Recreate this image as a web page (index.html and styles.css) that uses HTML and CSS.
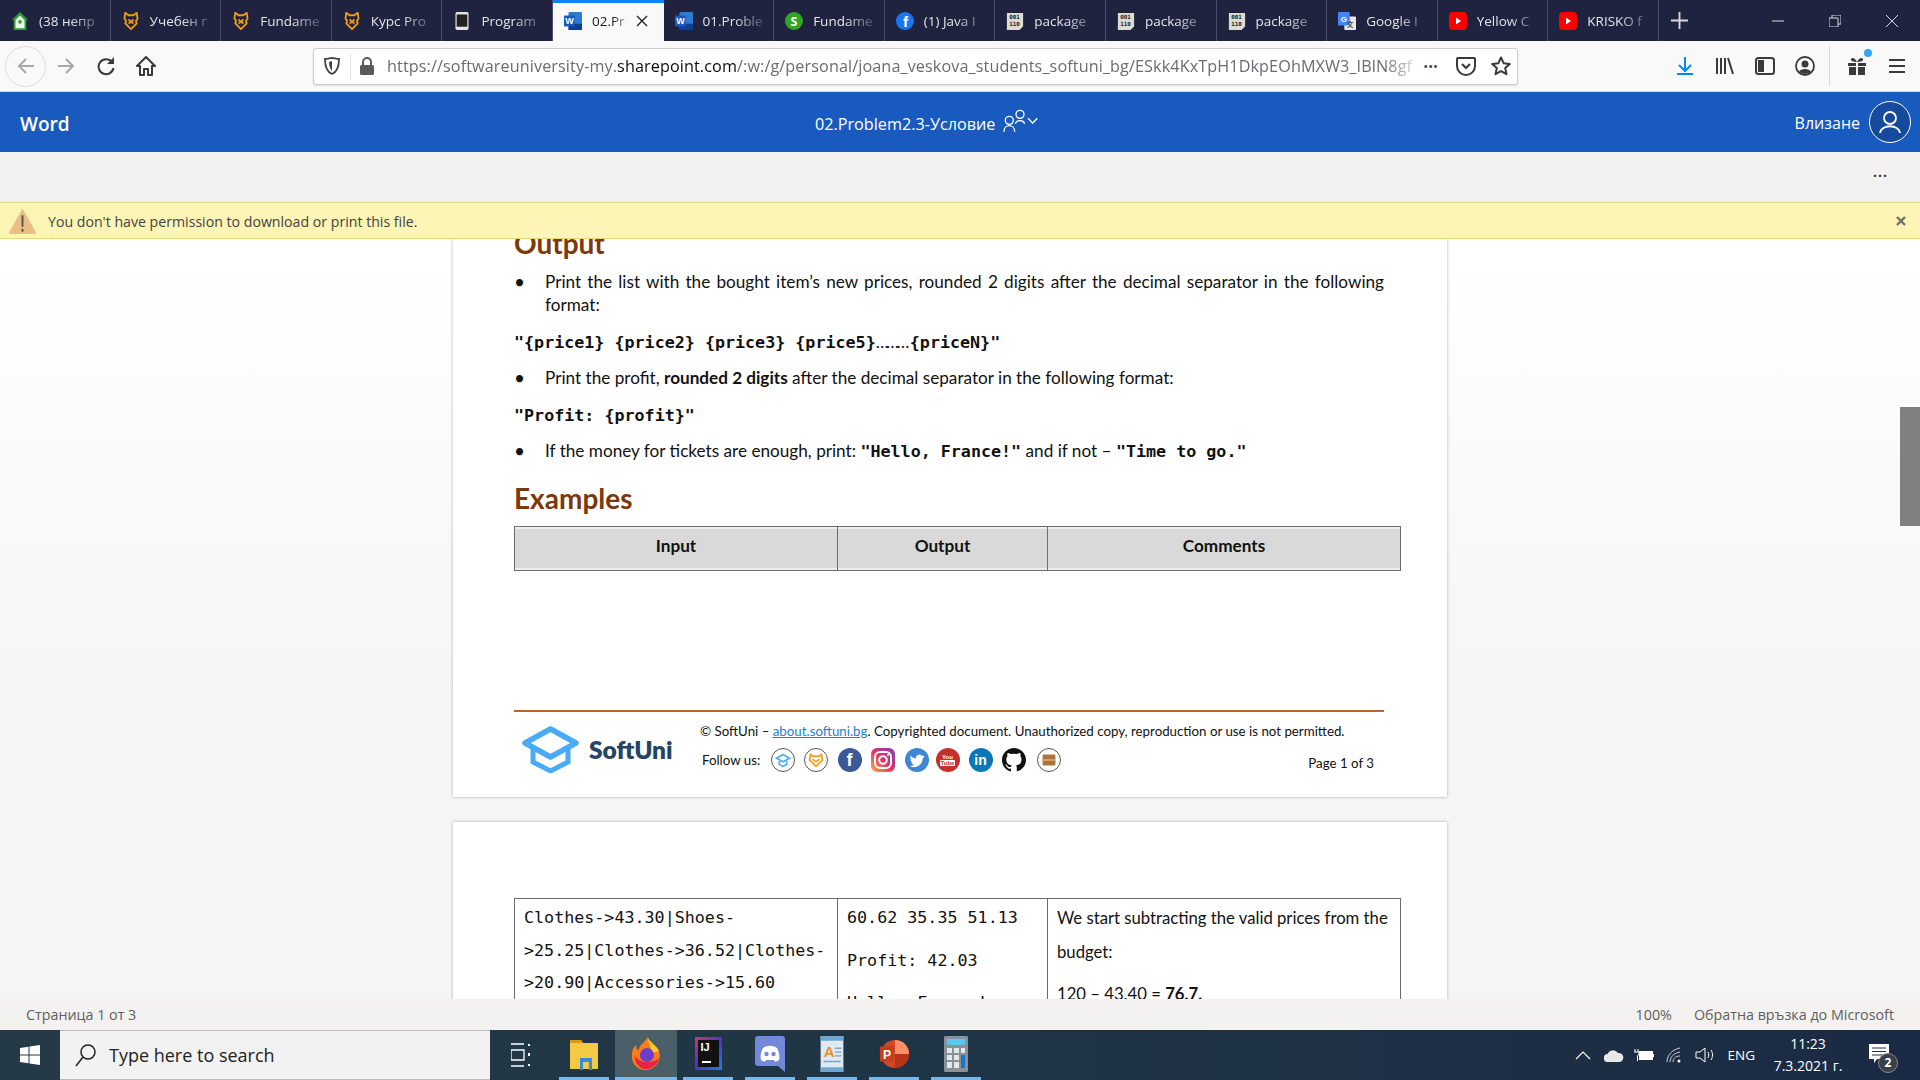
FILE: index.html
```html
<!DOCTYPE html>
<html lang="en">
  <head>
    <meta charset="UTF-8" />
    <title>02.Problem2.3-Условие</title>
    <link rel="stylesheet" href="styles.css">
  </head>

  <body>
    <svg class="defs" width="0" height="0">
      <symbol id="i-fox" viewBox="0 0 18 22">
        <path d="M2 1l4 3h6l4-3 1 7-2 3 1 3-7 7-7-7 1-3-2-3z M6 9l3 3 3-3 M6 14l3-2 3 2" fill="none" stroke="#f39c12" stroke-width="2.2" stroke-linejoin="round"/>
      </symbol>
      <symbol id="i-yt" viewBox="0 0 18 18">
        <rect width="18" height="18" y="0" rx="4" fill="#f00"/>
        <path d="M7 5.5l5 3.5-5 3.5z" fill="#fff"/>
      </symbol>
    </svg>

    <div class="tabs">
      <div class="tab">
        <svg class="tab-icon" viewBox="0 0 18 20"><path d="M9 0l9 9h-2v11H2V9H0z" fill="#2f9e35"/><path d="M9 4l5 5v9H4V9z" fill="#e9f5e6"/><circle cx="9" cy="11" r="2" fill="#2f9e35"/></svg>
        <span class="tab-title">(38 непр</span>
      </div>
      <div class="tab"><svg class="tab-icon"><use href="#i-fox"/></svg><span class="tab-title">Учебен г</span></div>
      <div class="tab"><svg class="tab-icon"><use href="#i-fox"/></svg><span class="tab-title">Fundame</span></div>
      <div class="tab"><svg class="tab-icon"><use href="#i-fox"/></svg><span class="tab-title">Курс Pro</span></div>
      <div class="tab">
        <svg class="tab-icon" viewBox="0 0 18 22"><rect x="1" width="16" height="22" rx="2" fill="#e4e4e4"/><rect x="2.5" y="3" width="13" height="15" fill="#222"/></svg>
        <span class="tab-title">Program</span>
      </div>
      <div class="tab active">
        <svg class="tab-icon" viewBox="0 0 20 20"><rect x="5" width="15" height="20" rx="1.500" fill="#2b7cd3"/><rect x="5" y="13" width="15" height="7" fill="#103f91"/><rect y="4" width="12" height="12" rx="1" fill="#185abd"/><text x="6" y="13.500" class="svg-w">W</text></svg>
        <span class="tab-title">02.Pr</span>
        <svg class="tab-close" viewBox="0 0 12 12"><path d="M1 1l10 10M11 1L1 11" stroke="#222" stroke-width="1.4"/></svg>
      </div>
      <div class="tab">
        <svg class="tab-icon" viewBox="0 0 20 20"><rect x="5" width="15" height="20" rx="1.500" fill="#2b7cd3"/><rect x="5" y="13" width="15" height="7" fill="#103f91"/><rect y="4" width="12" height="12" rx="1" fill="#185abd"/><text x="6" y="13.500" class="svg-w">W</text></svg>
        <span class="tab-title">01.Proble</span>
      </div>
      <div class="tab">
        <svg class="tab-icon" viewBox="0 0 20 20"><circle cx="10" cy="10" r="10" fill="#2ea820"/><text x="10" y="15" class="svg-s">S</text></svg>
        <span class="tab-title">Fundame</span>
      </div>
      <div class="tab">
        <svg class="tab-icon" viewBox="0 0 20 20"><circle cx="10" cy="10" r="10" fill="#1877f2"/><text x="10.5" y="17" class="svg-f">f</text></svg>
        <span class="tab-title">(1) Java I</span>
      </div>
      <div class="tab">
        <svg class="tab-icon" viewBox="0 0 18 20"><path d="M0 1h18v15l-4 4H0z" fill="#dcdcd4"/><text x="2.500" y="8" class="svg-bin">001</text><text x="2.500" y="15.500" class="svg-bin">110</text></svg>
        <span class="tab-title">package</span>
      </div>
      <div class="tab">
        <svg class="tab-icon" viewBox="0 0 18 20"><path d="M0 1h18v15l-4 4H0z" fill="#dcdcd4"/><text x="2.500" y="8" class="svg-bin">001</text><text x="2.500" y="15.500" class="svg-bin">110</text></svg>
        <span class="tab-title">package</span>
      </div>
      <div class="tab">
        <svg class="tab-icon" viewBox="0 0 18 20"><path d="M0 1h18v15l-4 4H0z" fill="#dcdcd4"/><text x="2.500" y="8" class="svg-bin">001</text><text x="2.500" y="15.500" class="svg-bin">110</text></svg>
        <span class="tab-title">package</span>
      </div>
      <div class="tab">
        <svg class="tab-icon" viewBox="0 0 20 20"><rect x="7" y="5" width="13" height="15" rx="1" fill="#e8e8e8"/><rect y="0" width="13" height="15" rx="1" fill="#4285f4"/><text x="6.5" y="11" class="svg-g">G</text><text x="13.5" y="17" class="svg-a">文</text></svg>
        <span class="tab-title">Google I</span>
      </div>
      <div class="tab"><svg class="tab-icon"><use href="#i-yt"/></svg><span class="tab-title">Yellow C</span></div>
      <div class="tab"><svg class="tab-icon"><use href="#i-yt"/></svg><span class="tab-title">KRISKO f</span></div>
      <svg class="new-tab" viewBox="0 0 18 18"><path d="M9 0v18M0 9h18" stroke="#d8d8de" stroke-width="2"/></svg>
      <div class="win-controls">
        <svg viewBox="0 0 12 12"><path d="M0 6h12" stroke="#d8d8de"/></svg>
        <svg viewBox="0 0 12 12"><path d="M3 3V0h9v9H9M0 3h9v9H0z" fill="none" stroke="#d8d8de"/></svg>
        <svg viewBox="0 0 12 12"><path d="M0 0l12 12M12 0L0 12" stroke="#d8d8de"/></svg>
      </div>
    </div>

    <div class="toolbar">
      <div class="back-btn">
        <svg viewBox="0 0 20 20"><path d="M18 10H3M10 3l-7 7 7 7" fill="none" stroke="#a8a8a8" stroke-width="2"/></svg>
      </div>
      <div class="tool-btn"><svg viewBox="0 0 20 20"><path d="M2 10h15M10 3l7 7-7 7" fill="none" stroke="#a8a8a8" stroke-width="2"/></svg></div>
      <div class="tool-btn"><svg viewBox="0 0 20 20"><path d="M16 6a7.5 7.5 0 1 0 1.500 6" fill="none" stroke="#3a3a3a" stroke-width="2"/><path d="M18 1v7h-7z" fill="#3a3a3a"/></svg></div>
      <div class="tool-btn"><svg viewBox="0 0 20 20"><path d="M10 1L1 10h3v9h4v-6h4v6h4v-9h3z" fill="none" stroke="#3a3a3a" stroke-width="2" stroke-linejoin="round"/></svg></div>

      <div class="urlbar">
        <svg class="url-shield" viewBox="0 0 16 18"><path d="M1 2c3 0 5-1 7-1s4 1 7 1c0 8-2 13-7 15C3 15 1 10 1 2z" fill="none" stroke="#444" stroke-width="1.800"/><path d="M8 4v10c-2-2-3-5-3-9z" fill="#444"/></svg>
        <span class="url-div"></span>
        <svg class="url-lock" viewBox="0 0 14 18"><path d="M3 8V5a4 4 0 0 1 8 0v3" fill="none" stroke="#5a5a5a" stroke-width="2"/><rect y="8" width="14" height="10" rx="1.500" fill="#5a5a5a"/></svg>
        <div class="url-text">https://softwareuniversity-my.<b>sharepoint.com</b>/:w:/g/personal/joana_veskova_students_softuni_bg/ESkk4KxTpH1DkpEOhMXW3_IBlN8gf</div>
        <div class="url-dots">•••</div>
        <svg class="url-icon" viewBox="0 0 20 20"><path d="M2 2h16a1 1 0 0 1 1 1v7a9 9 0 0 1-18 0V3a1 1 0 0 1 1-1z" fill="none" stroke="#3a3a3a" stroke-width="2"/><path d="M6 8l4 4 4-4" fill="none" stroke="#3a3a3a" stroke-width="2.200"/></svg>
        <svg class="url-icon" viewBox="0 0 20 20"><path d="M10 1.500l2.600 5.700 6.200.7-4.600 4.200 1.300 6.100L10 15.100l-5.500 3.100 1.300-6.100L1.200 7.900l6.200-.7z" fill="none" stroke="#3a3a3a" stroke-width="2" stroke-linejoin="round"/></svg>
      </div>

      <div class="tool-right">
        <div class="tool-btn"><svg viewBox="0 0 20 20"><path d="M10 1v13M4 9l6 6 6-6" fill="none" stroke="#0a84ff" stroke-width="2"/><path d="M2 18h16" stroke="#0a84ff" stroke-width="2"/></svg></div>
        <div class="tool-btn"><svg viewBox="0 0 20 20"><path d="M2 2v16M6 2v16M10 2v16M13 2l5 16" fill="none" stroke="#3a3a3a" stroke-width="2"/></svg></div>
        <div class="tool-btn"><svg viewBox="0 0 20 20"><rect x="1" y="2" width="18" height="16" rx="2.500" fill="none" stroke="#3a3a3a" stroke-width="2"/><rect x="3" y="4" width="6" height="12" fill="#3a3a3a"/></svg></div>
        <div class="tool-btn"><svg viewBox="0 0 20 20"><circle cx="10" cy="10" r="9" fill="none" stroke="#3a3a3a" stroke-width="1.800"/><circle cx="10" cy="8" r="3.500" fill="#3a3a3a"/><path d="M4 16c1-4 11-4 12 0-3 2.500-9 2.500-12 0z" fill="#3a3a3a"/></svg></div>
        <div class="tool-sep"></div>
        <div class="tool-btn gift">
          <svg viewBox="0 0 20 20"><path d="M1 7h8v3H1zM11 7h8v3h-8zM2 11h7v8H2zM11 11h7v8h-7z" fill="#3a3a3a"/><path d="M10 6c-2-4-5-5-6-3s3 3 6 3zm0 0c2-4 5-5 6-3s-3 3-6 3z" fill="#3a3a3a"/></svg>
          <span class="gift-dot"></span>
        </div>
        <div class="tool-btn"><svg viewBox="0 0 20 20"><path d="M2 4h16M2 10h16M2 16h16" stroke="#3a3a3a" stroke-width="2"/></svg></div>
      </div>
    </div>

    <div class="word-bar">
      <div class="word-app">Word</div>
      <div class="word-title">02.Problem2.3-Условие</div>
      <svg class="word-people" viewBox="0 0 26 18"><circle cx="5" cy="8.500" r="3" fill="none" stroke="#fff"/><path d="M1 17c0-6 8-6 8 0" fill="none" stroke="#fff"/><circle cx="13" cy="4" r="3" fill="none" stroke="#fff"/><path d="M9.500 11c1-3 6-3 7 0" fill="none" stroke="#fff"/><path d="M19 7l3.500 3.500L26 7" fill="none" stroke="#fff"/></svg>
      <div class="word-signin">
        <span>Влизане</span>
        <div class="avatar">
          <svg viewBox="0 0 24 24"><circle cx="12" cy="8" r="6" fill="none" stroke="#fff" stroke-width="1.800"/><path d="M2 23c1-9 19-9 20 0" fill="none" stroke="#fff" stroke-width="1.800"/></svg>
        </div>
      </div>
    </div>

    <div class="ribbon"><span class="ribbon-more">...</span></div>

    <div class="notice">
      <svg class="notice-icon" viewBox="0 0 30 28"><path d="M15 1L29 26a1 1 0 0 1-1 1.500H2A1 1 0 0 1 1 26z" fill="#e9bf85"/><path d="M15 8v12M15 22v3" stroke="#555" stroke-width="2"/></svg>
      <span class="notice-text">You don't have permission to download or print this file.</span>
      <svg class="notice-close" viewBox="0 0 10 10"><path d="M1 1l8 8M9 1L1 9" stroke="#6f6f6f" stroke-width="2.400"/></svg>
    </div>

    <div class="doc">
      <div class="page first">
        <h2>Output</h2>
        <ul>
          <li class="just">Print the list with the bought item’s new prices, rounded 2 digits after the decimal separator in the following format:</li>
        </ul>
        <p class="code-line"><code>"{price1} {price2} {price3} {price5}</code><span class="dots">………</span><code>{priceN}"</code></p>
        <ul>
          <li>Print the profit, <b>rounded 2 digits</b> after the decimal separator in the following format:</li>
        </ul>
        <p class="code-line"><code>"Profit: {profit}"</code></p>
        <ul>
          <li>If the money for tickets are enough, print: <code>"Hello, France!"</code> and if not – <code>"Time to go."</code></li>
        </ul>
        <h2 class="examples">Examples</h2>
        <table class="ex-table head">
          <tr>
            <th class="col-a">Input</th>
            <th class="col-b">Output</th>
            <th class="col-c">Comments</th>
          </tr>
        </table>

        <div class="foot">
          <div class="foot-logo">
            <svg viewBox="0 0 61 47"><path d="M30.500 3L56 17 30.500 31 5 17z" fill="none" stroke="#49aaf7" stroke-width="5.500" stroke-linejoin="round"/><path d="M13 23v13l17.500 9L48 36V23" fill="none" stroke="#49aaf7" stroke-width="5"/></svg>
            <span>SoftUni</span>
          </div>
          <div class="foot-info">
            <div>© SoftUni – <a href="#">about.softuni.bg</a>. Copyrighted document. Unauthorized copy, reproduction or use is not permitted.</div>
            <div class="follow">
              <span class="follow-label">Follow us:</span>
              <div class="soc ring"><svg viewBox="0 0 24 24"><path d="M12 6l7 4-7 4-7-4zM8 13v4l4 2 4-2v-4" fill="none" stroke="#49aaf7" stroke-width="1.800"/></svg></div>
              <div class="soc ring"><svg viewBox="0 0 24 24"><path d="M6 6l3 2h6l3-2 1 6-7 7-7-7zM8 11l4 3 4-3" fill="none" stroke="#f39c12" stroke-width="1.800"/></svg></div>
              <div class="soc fb">f</div>
              <div class="soc insta"><svg viewBox="0 0 24 24"><rect x="4" y="4" width="16" height="16" rx="5" fill="none" stroke="#fff" stroke-width="2"/><circle cx="12" cy="12" r="3.800" fill="none" stroke="#fff" stroke-width="2"/><circle cx="17" cy="7" r="1" fill="#fff"/></svg></div>
              <div class="soc tw"><svg viewBox="0 0 24 24"><path d="M19 8c-.6.300-1.200.5-1.800.6.700-.4 1.100-1 1.400-1.700-.6.400-1.300.6-2 .8a3.200 3.200 0 0 0-5.500 2.900C9 10.400 7 9.300 5.700 7.700c-.7 1.300-.3 3 1 3.900-.5 0-1-.1-1.400-.4 0 1.500 1.100 2.900 2.600 3.200-.5.100-1 .1-1.500 0 .4 1.300 1.600 2.200 3 2.200a6.500 6.500 0 0 1-4.700 1.300c5 3 12.500.5 13-7.500.6-.6 1.200-1.200 1.800-2.400z" fill="#fff"/></svg></div>
              <div class="soc yt"><span>You</span><span class="tube">Tube</span></div>
              <div class="soc li">in</div>
              <div class="soc gh"><svg viewBox="0 0 24 24"><path d="M12 0C5.400 0 0 5.400 0 12c0 5.300 3.400 9.800 8.200 11.400.6.100.8-.3.800-.6v-2.100c-3.300.7-4-1.600-4-1.600-.6-1.400-1.400-1.800-1.400-1.800-1.100-.7.100-.7.100-.7 1.200.1 1.800 1.200 1.800 1.200 1.100 1.800 2.800 1.300 3.500 1 .1-.8.400-1.300.8-1.600-2.700-.3-5.500-1.300-5.500-5.900 0-1.300.5-2.400 1.200-3.200-.1-.3-.5-1.500.1-3.200 0 0 1-.3 3.300 1.200a11.500 11.500 0 0 1 6 0c2.300-1.500 3.300-1.200 3.300-1.200.7 1.700.2 2.900.1 3.200.8.800 1.200 1.900 1.200 3.200 0 4.600-2.800 5.600-5.500 5.900.4.400.8 1.100.8 2.200v3.300c0 .3.200.7.800.6A12 12 0 0 0 24 12C24 5.400 18.600 0 12 0z" fill="#111"/></svg></div>
              <div class="soc ring"><svg viewBox="0 0 24 24"><rect x="5" y="6" width="14" height="12" rx="1.500" fill="#a9743d"/><path d="M5 11h14v2H5z" fill="#d9a566"/></svg></div>
              <span class="page-num">Page 1 of 3</span>
            </div>
          </div>
        </div>
      </div>

      <div class="page second">
        <table class="ex-table">
          <tr>
            <td class="col-a mono">Clothes-&gt;43.30|Shoes-<br>&gt;25.25|Clothes-&gt;36.52|Clothes-<br>&gt;20.90|Accessories-&gt;15.60</td>
            <td class="col-b mono">
              <p>60.62 35.35 51.13</p>
              <p>Profit: 42.03</p>
              <p>Hello, France!</p>
            </td>
            <td class="col-c">
              <p class="cm-first">We start subtracting the valid prices from the budget:</p>
              <p>120 – 43.40 = <b>76.7.</b></p>
            </td>
          </tr>
        </table>
      </div>

      <div class="scroll-thumb"></div>
    </div>

    <div class="status">
      <span>Страница 1 от 3</span>
      <span class="status-right">100%</span>
      <span class="status-link">Обратна връзка до Microsoft</span>
    </div>

    <div class="taskbar">
      <div class="start">
        <svg viewBox="0 0 20 20"><path d="M0 3l8.500-1.200V9.500H0zM9.500 1.600L20 0v9.500H9.500zM0 10.500h8.500v7.700L0 17zM9.500 10.500H20V20L9.500 18.400z" fill="#fff"/></svg>
      </div>
      <div class="search">
        <svg viewBox="0 0 22 24"><circle cx="13" cy="9" r="7" fill="none" stroke="#222" stroke-width="1.500"/><path d="M8 14l-7 9" stroke="#222" stroke-width="1.500"/></svg>
        <span>Type here to search</span>
      </div>
      <div class="task-view">
        <svg viewBox="0 0 20 24"><path d="M0 1h13M0 23h13M0 7h13v10H0z" fill="none" stroke="#fff" stroke-width="1.300"/><path d="M18 1v2M18 10v3M18 21v2" stroke="#fff" stroke-width="2"/></svg>
      </div>
      <div class="apps">
        <div class="app on">
          <svg viewBox="0 0 30 32"><path d="M1 2h11l2 3h15v26H1z" fill="#f6c944"/><path d="M1 2h11l2 3H1z" fill="#d99a1c"/><path d="M11 20h12v12h-3v-8h-6v8h-3z" fill="#2f8fd8"/></svg>
        </div>
        <div class="app on current">
          <svg viewBox="0 0 32 36"><path d="M18 0c1 5 9 8 12 15 3 10-4 20-14 20S0 28 1 18c.500-6 3-9 5-10-1 3 0 5 2 6 1-6 6-8 10-14z" fill="#ff7a18"/><path d="M18 0c1 5 9 8 12 15l-8 2c0-6-4-9-4-17z" fill="#ffc72c"/><path d="M4 20c0 10 8 15 14 14 6-1 11-6 12-12-4 5-18 8-26-2z" fill="#e8234a"/><circle cx="17" cy="19" r="7.500" fill="#6b3fc9"/></svg>
        </div>
        <div class="app on">
          <div class="ij"><span>IJ</span><i></i></div>
        </div>
        <div class="app on">
          <svg viewBox="0 0 30 36"><path d="M3 0h24a3 3 0 0 1 3 3v33l-7-6H3a3 3 0 0 1-3-3V3a3 3 0 0 1 3-3z" fill="#7289da"/><path d="M8 12c4-3 10-3 14 0 2 4 3 8 2 12-1.500 1-3 1.500-4 1.700l-1-1.700H11l-1 1.700c-1-.2-2.500-.7-4-1.700-1-4 0-8 2-12z" fill="#fff"/><circle cx="11.500" cy="18" r="2.200" fill="#7289da"/><circle cx="18.500" cy="18" r="2.200" fill="#7289da"/></svg>
        </div>
        <div class="app on">
          <svg viewBox="0 0 26 38"><rect x="1" y="0" width="24" height="38" fill="#dfe9f2"/><rect x="1" y="0" width="24" height="5" fill="#6fa6cf"/><rect x="1" y="33" width="24" height="5" fill="#6fa6cf"/><text x="10" y="22" class="svg-paint">A</text><path d="M16 13h7M16 17h7M16 21h7M4 27h18" stroke="#7ea4c4" stroke-width="1.500"/></svg>
        </div>
        <div class="app on">
          <svg viewBox="0 0 32 36"><circle cx="17" cy="18" r="15" fill="#d24726"/><path d="M17 3a15 15 0 0 1 15 15H17z" fill="#ff8f6b"/><path d="M17 18h15a15 15 0 0 1-15 15z" fill="#b7341b"/><rect x="1" y="10" width="15" height="16" rx="1" fill="#c43e1c"/><text x="8.500" y="23" class="svg-p">P</text></svg>
        </div>
        <div class="app on">
          <svg viewBox="0 0 24 36"><rect width="24" height="36" rx="1.500" fill="#8a9299"/><rect x="3" y="3" width="18" height="6" fill="#58c8ef"/><path d="M3 12h5v5H3zM10 12h5v5h-5zM17 12h4v5h-4zM3 19h5v5H3zM10 19h5v5h-5zM3 26h5v6H3zM10 26h5v6h-5z" fill="#e4e8ea"/><rect x="17" y="19" width="4" height="13" fill="#1976c5"/></svg>
        </div>
      </div>
      <div class="tray">
        <svg class="t-chev" viewBox="0 0 16 10"><path d="M1 9l7-7 7 7" fill="none" stroke="#fff" stroke-width="1.200"/></svg>
        <svg class="t-cloud" viewBox="0 0 20 13"><path d="M4 13a4 4 0 0 1-.5-8A6 6 0 0 1 14 4a4.500 4.500 0 0 1 1.500 9z" fill="#e8e8e8"/></svg>
        <svg class="t-batt" viewBox="0 0 20 13"><path d="M1 0v3M4 0v3M0 3h5v2l-1.500 2v5" fill="none" stroke="#fff"/><rect x="5.500" y="2.500" width="13" height="8" fill="#fff" stroke="#fff"/><rect x="19" y="5" width="1" height="3" fill="#fff"/></svg>
        <svg class="t-wifi" viewBox="0 0 16 16"><path d="M1 15C1 8 7 2 14 1M4 15c0-5 4-9 10-10M7 15c0-3 2-6 7-6" fill="none" stroke="#c9d0d8"/><circle cx="13" cy="14" r="1.500" fill="#fff"/></svg>
        <svg class="t-sound" viewBox="0 0 20 16"><path d="M1 5h4l5-4v14l-5-4H1z" fill="none" stroke="#fff"/><path d="M13 5c1 2 1 4 0 6M16 3c2 3 2 7 0 10" fill="none" stroke="#fff"/></svg>
        <span class="t-lang">ENG</span>
        <div class="t-clock"><span>11:23</span><span>7.3.2021 г.</span></div>
        <div class="t-note">
          <svg viewBox="0 0 20 20"><path d="M0 0h20v15H8l-3 4v-4H0z" fill="#fff"/><path d="M3 4h14M3 7.500h14M3 11h14" stroke="#1e2c43"/></svg>
          <span class="t-badge">2</span>
        </div>
      </div>
    </div>
  </body>
</html>
```
FILE: styles.css
```css
* {
  box-sizing: border-box;
}

html,
body {
  margin: 0;
  height: 100%;
}

body {
  display: flex;
  flex-direction: column;
  height: 100vh;
  overflow: hidden;
  font-family: "Open Sans", "Noto Sans", sans-serif;
  background: #fff;
}

.defs {
  position: absolute;
}

.svg-w {
  font: 700 10px "Liberation Sans", sans-serif;
  fill: #fff;
  text-anchor: middle;
}

.svg-bin {
  font: 700 6.5px "DejaVu Sans Mono", monospace;
  fill: #222;
}

.svg-s {
  font: 700 14px "Open Sans", sans-serif;
  fill: #fff;
  text-anchor: middle;
}

.svg-f {
  font: 700 17px "Liberation Sans", sans-serif;
  fill: #fff;
  text-anchor: middle;
}

.svg-g {
  font: 700 9px "Liberation Sans", sans-serif;
  fill: #fff;
  text-anchor: middle;
}

.svg-a {
  font: 700 7px "Noto Sans CJK SC", sans-serif;
  fill: #444;
  text-anchor: middle;
}

.svg-paint {
  font: 700 16px "Liberation Sans", sans-serif;
  fill: #e8912d;
  text-anchor: middle;
}

.svg-p {
  font: 700 13px "Liberation Sans", sans-serif;
  fill: #fff;
  text-anchor: middle;
}

/* browser tabs */
.tabs {
  flex: 0 0 41px;
  display: flex;
  align-items: stretch;
  background: #202340;
  color: #e4e5ea;
}

.tab {
  flex: 0 0 110.6px;
  min-width: 0;
  display: flex;
  align-items: center;
  padding: 0 8px 0 11px;
  border-right: 1px solid #4b4e69;
  font-size: 13.5px;
}

.tab-icon {
  flex: 0 0 18px;
  width: 18px;
  height: 18px;
  margin-right: 10px;
}

.tab-title {
  flex: 1;
  min-width: 0;
  overflow: hidden;
  white-space: nowrap;
  -webkit-mask-image: linear-gradient(90deg, #000 50%, rgba(0, 0, 0, 0.15) 100%);
  mask-image: linear-gradient(90deg, #000 50%, rgba(0, 0, 0, 0.15) 100%);
}

.tab.active {
  background: #f9f9fa;
  color: #18191c;
  border-top: 3px solid #0a84ff;
  border-right: 0;
  padding: 0 16px 3px 11px;
}

.tab-close {
  flex: 0 0 12px;
  width: 12px;
  height: 12px;
  margin-left: 4px;
}

.new-tab {
  flex: none;
  width: 17px;
  height: 17px;
  margin: 12px 0 0 12px;
}

.win-controls {
  margin-left: auto;
  display: flex;
  align-items: center;
  gap: 45px;
  padding-right: 22px;
}

.win-controls svg {
  width: 12px;
  height: 12px;
}

/* browser toolbar */
.toolbar {
  flex: 0 0 51px;
  display: flex;
  align-items: center;
  padding-left: 5px;
  background: #f9f9fa;
  border-bottom: 1px solid #d7d7db;
}

.back-btn {
  width: 41px;
  height: 41px;
  display: flex;
  align-items: center;
  justify-content: center;
  border: 1px solid #dcdcdc;
  border-radius: 50%;
}

.back-btn svg,
.tool-btn svg {
  width: 20px;
  height: 20px;
}

.tool-btn {
  position: relative;
  flex: 0 0 40px;
  height: 40px;
  display: flex;
  align-items: center;
  justify-content: center;
}

.urlbar {
  margin-left: 147px;
  flex: 0 0 1205px;
  height: 37px;
  display: flex;
  align-items: center;
  background: #fff;
  border: 1px solid #ccc;
  border-radius: 3px;
  padding: 0 6px 0 10px;
  box-shadow: 0 1px 2px rgba(0, 0, 0, 0.1);
}

.url-shield {
  flex: 0 0 16px;
  height: 18px;
}

.url-div {
  flex: 0 0 1px;
  height: 25px;
  margin-left: 10px;
  background: #e0e0e0;
}

.url-lock {
  flex: 0 0 14px;
  height: 18px;
  margin-left: 9px;
}

.url-text {
  flex: 1;
  min-width: 0;
  margin-left: 13px;
  overflow: hidden;
  white-space: nowrap;
  font-size: 16.2px;
  letter-spacing: 0.1px;
  color: #6b6b70;
  -webkit-mask-image: linear-gradient(90deg, #000 97%, rgba(0, 0, 0, 0.2));
  mask-image: linear-gradient(90deg, #000 97%, rgba(0, 0, 0, 0.2));
}

.url-text b {
  font-weight: 400;
  color: #0c0c0d;
}

.url-dots {
  margin: 0 3px 0 8px;
  font-size: 13px;
  color: #3a3a3a;
}

.url-icon {
  flex: 0 0 20px;
  height: 20px;
  margin-left: 15px;
}

.tool-right {
  margin-left: auto;
  display: flex;
  align-items: center;
  padding-right: 3px;
}

.tool-sep {
  width: 1px;
  height: 40px;
  background: #d7d7db;
  margin: 0 7px 0 4px;
}

.gift-dot {
  position: absolute;
  top: 3px;
  right: 5px;
  width: 8px;
  height: 8px;
  border-radius: 50%;
  background: #2ea6f2;
}

/* word header */
.word-bar {
  flex: 0 0 60px;
  display: flex;
  align-items: center;
  background: #185abd;
  color: #fff;
  padding: 3px 9px 0 20px;
}

.word-app {
  flex: 0 0 795px;
  font-size: 19px;
  font-weight: 600;
}

.word-title {
  font-size: 16.2px;
}

.word-people {
  width: 38px;
  height: 24px;
  margin: -6px 0 0 6px;
}

.word-signin {
  margin: -3px 0 0 auto;
  display: flex;
  align-items: center;
  gap: 9px;
  font-size: 16px;
}

.word-signin span {
  margin-top: 2px;
}

.avatar {
  width: 42px;
  height: 42px;
  display: flex;
  align-items: center;
  justify-content: center;
  border: 1px solid #fff;
  border-radius: 50%;
  background: #154a9d;
}

.avatar svg {
  width: 24px;
  height: 24px;
}

.ribbon {
  flex: 0 0 50px;
  display: flex;
  justify-content: flex-end;
  align-items: center;
  padding-right: 32px;
  background: #f3f2f1;
}

.ribbon-more {
  margin-top: -11px;
  font-size: 14px;
  font-weight: 700;
  letter-spacing: 1px;
  color: #333;
}

.notice {
  flex: 0 0 37px;
  display: flex;
  align-items: center;
  padding: 0 14px 0 8px;
  background: #fcf5b5;
  border-top: 1px solid #e0d97d;
  border-bottom: 1px solid #e0d97d;
  font-size: 14.15px;
  color: #444;
}

.notice-text {
  margin-top: 1px;
}

.notice-icon {
  width: 29px;
  height: 28px;
  margin-right: 11px;
}

.notice-close {
  margin-left: auto;
  width: 10px;
  height: 10px;
}

/* document area */
.doc {
  position: relative;
  flex: 1;
  min-height: 0;
  overflow: hidden;
  display: flex;
  flex-direction: column;
  align-items: center;
  padding-right: 20px;
  background: linear-gradient(#fff, #f5f5f5 60%);
  font-family: Lato, "Open Sans", sans-serif;
  color: #111;
}

.scroll-thumb {
  position: absolute;
  top: 168px;
  right: 0;
  width: 20px;
  height: 119px;
  background: #808080;
}

.page {
  flex: none;
  width: 994px;
  background: #fff;
  box-shadow: 0 0 3px rgba(0, 0, 0, 0.3);
  padding: 0 46px 0 61px;
  font-size: 17.17px;
}

.page.first {
  display: flex;
  flex-direction: column;
  height: 588px;
  margin-top: -30px;
  padding-top: 18px;
}

.page.second {
  margin-top: 25px;
  padding-top: 76px;
  height: 400px;
}

h2 {
  margin: 0 0 11px;
  font-size: 28px;
  line-height: 32px;
  font-weight: 700;
  color: #7c380a;
}

h2.examples {
  margin: 20px 0 12px;
}

.page ul {
  margin: 0 17px 0 0;
  padding: 0 0 0 31px;
  list-style: none;
}

.page li {
  line-height: 23px;
}

.page li::before {
  content: "•";
  display: inline-block;
  width: 31px;
  height: 23px;
  margin-left: -31px;
  vertical-align: top;
  font-size: 19px;
  line-height: 23px;
}

.just {
  text-align: justify;
}

.code-line {
  margin: 14px 0 13px;
  height: 23px;
  line-height: 23px;
}

.dots {
  letter-spacing: -2.5px;
  margin-right: 3px;
}

code {
  font: 700 16.7px "DejaVu Sans Mono", monospace;
}

.ex-table {
  width: 886px;
  table-layout: fixed;
  border-collapse: collapse;
}

.ex-table th,
.ex-table td {
  border: 1px solid #6d6d6d;
}

.ex-table th {
  height: 44px;
  padding: 0 0 7px;
  background: #d9d9d9;
  font-weight: 700;
  box-shadow: inset 0 -2px #eee, inset 0 2px #eee;
}

.col-a {
  width: 323px;
}

.col-b {
  width: 210px;
}

.col-c {
  width: 353px;
}

.ex-table td {
  vertical-align: top;
  padding: 2px 9px;
}

.ex-table td.col-c {
  font-size: 16.7px;
  padding-right: 6px;
}

.mono {
  font-family: "DejaVu Sans Mono", monospace;
  font-size: 16.7px;
  line-height: 32.5px;
}

.mono p {
  margin: 0 0 10px;
}

.col-c p {
  margin: 0;
  line-height: 34px;
}

.col-c p.cm-first {
  margin-bottom: 8px;
}

/* page footer */
.foot {
  flex: none;
  margin: auto 17px 0 0;
  height: 87px;
  display: flex;
  border-top: 2px solid #b5682b;
  font-size: 13.3px;
  line-height: 18px;
}

.foot-logo {
  flex: 0 0 186px;
  display: flex;
  align-items: flex-start;
  gap: 8px;
  padding: 14px 0 0 6px;
  font-size: 24.5px;
  line-height: 47px;
  font-weight: 800;
  color: #234465;
}

.foot-logo svg {
  width: 61px;
  height: 47px;
}

.foot-info {
  flex: 1;
  padding-top: 10px;
}

.foot-info a {
  color: #1a7fd6;
}

.follow {
  display: flex;
  align-items: center;
  margin-top: 8px;
}

.follow-label {
  flex: 0 0 70.5px;
  padding-left: 2px;
}

.soc {
  flex: none;
  width: 24px;
  height: 24px;
  margin-right: 9.5px;
  display: flex;
  flex-direction: column;
  align-items: center;
  justify-content: center;
  border-radius: 50%;
  color: #fff;
  font: 700 15px/1 "Liberation Sans", sans-serif;
}

.soc svg {
  width: 100%;
  height: 100%;
}

.soc.ring {
  border: 1px solid #555;
}

.soc.fb {
  background: #3b5998;
  font-size: 18px;
}

.soc.insta {
  border-radius: 6px;
  background: linear-gradient(45deg, #fcb045, #e1306c 50%, #7a3fc0);
}

.soc.tw {
  margin-right: 7px;
  background: #3f87d2;
}

.soc.yt {
  margin-right: 9px;
  background: #c4302b;
  font-size: 6px;
}

.soc.yt .tube {
  padding: 0 1px;
  background: #fff;
  color: #c4302b;
  border-radius: 1px;
}

.soc.li {
  background: #0b78b6;
  font-size: 14px;
}

.soc.gh {
  margin-right: 10.5px;
  background: #fff;
}

.page-num {
  margin: 6px 10px 0 auto;
}

/* word status bar */
.status {
  flex: 0 0 31px;
  display: flex;
  align-items: center;
  padding: 0 26px;
  background: #f3f2f1;
  font-size: 14.3px;
  color: #605e5c;
}

.status-right {
  margin-left: auto;
}

.status-link {
  margin-left: 22px;
}

/* windows taskbar */
.taskbar {
  flex: 0 0 50px;
  display: flex;
  align-items: stretch;
  background: linear-gradient(90deg, #243a46, #1f3545 50%, #1b2a44);
  color: #fff;
}

.start {
  flex: 0 0 60px;
  display: flex;
  align-items: center;
  justify-content: center;
}

.start svg {
  width: 20px;
  height: 20px;
}

.search {
  flex: 0 0 430px;
  display: flex;
  align-items: center;
  gap: 12px;
  padding-left: 15px;
  background: #f2f2f2;
  border-top: 1px solid #bbb;
  border-bottom: 1px solid #bbb;
  font-size: 18px;
  color: #222;
}

.search svg {
  width: 22px;
  height: 24px;
}

.task-view {
  flex: 0 0 62px;
  display: flex;
  align-items: center;
  justify-content: center;
}

.task-view svg {
  width: 20px;
  height: 24px;
}

.apps {
  display: flex;
  margin-left: 1px;
}

.app {
  position: relative;
  flex: 0 0 62px;
  display: flex;
  align-items: center;
  justify-content: center;
  padding-bottom: 3px;
}

.app svg {
  width: 30px;
  height: 36px;
}

.app.on::after {
  content: "";
  position: absolute;
  left: 6px;
  right: 6px;
  bottom: 0;
  height: 3px;
  background: #76b9ed;
}

.app.current {
  background: #4a5f68;
}

.app.current::after {
  left: 0;
  right: 0;
}

.ij {
  position: relative;
  width: 27px;
  height: 33px;
  padding: 3px;
  background: linear-gradient(135deg, #d6336c, #4a36c4 50%, #1d7fe0);
}

.ij span {
  display: block;
  height: 100%;
  padding: 1px 0 0 3px;
  background: #111;
  font: 700 11px "Liberation Sans", sans-serif;
  color: #fff;
}

.ij i {
  position: absolute;
  left: 7px;
  bottom: 7px;
  width: 9px;
  height: 2px;
  background: #fff;
}

.tray {
  margin-left: auto;
  display: flex;
  align-items: center;
  padding-right: 29px;
}

.t-chev {
  width: 16px;
  height: 10px;
}

.t-cloud {
  width: 20px;
  height: 13px;
  margin-left: 13px;
}

.t-batt {
  width: 20px;
  height: 13px;
  margin-left: 10px;
}

.t-wifi {
  width: 16px;
  height: 16px;
  margin-left: 12px;
}

.t-sound {
  width: 20px;
  height: 16px;
  margin-left: 13px;
}

.t-lang {
  margin-left: 13px;
  font-size: 13.5px;
}

.t-clock {
  width: 90px;
  margin-left: 8px;
  display: flex;
  flex-direction: column;
  align-items: center;
  gap: 4px;
  font-size: 14px;
  line-height: 18px;
}

.t-note {
  position: relative;
  width: 22px;
  height: 22px;
  margin-left: 16px;
}

.t-note svg {
  width: 20px;
  height: 20px;
}

.t-badge {
  position: absolute;
  left: 9px;
  top: 9px;
  width: 20px;
  height: 20px;
  border-radius: 50%;
  background: #3a3f48;
  border: 1px solid #888;
  font-size: 12px;
  font-weight: 700;
  line-height: 18px;
  text-align: center;
}
```
